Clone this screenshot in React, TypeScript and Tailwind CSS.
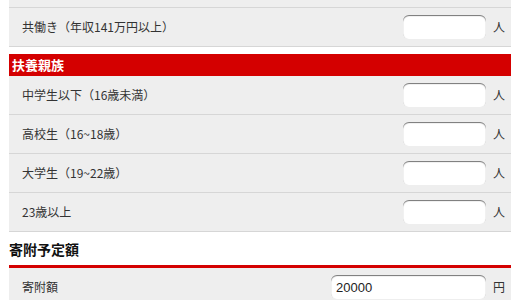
import React from 'react';

interface CountRowProps {
  label: string;
  unit: string;
  value?: string;
  wide?: boolean;
  className?: string;
}

const CountRow: React.FC<CountRowProps> = ({ label, unit, value = '', wide = false, className = '' }) => (
  <div className={`flex h-[39px] items-center justify-between border-b border-[#d6d6d6] bg-[#eeeeee] pl-[13px] pr-[6px] ${className}`}>
    <span className="text-[12px] text-[#333]">{label}</span>
    <div className="flex items-center">
      <input
        type="text"
        defaultValue={value}
        className={`h-[24px] rounded-[6px] bg-white px-[5px] text-[13px] text-[#222] shadow-[inset_0_1px_1px_rgba(0,0,0,0.55)] outline-none ${wide ? 'w-[155px]' : 'w-[83px]'}`}
        style={{ fontFamily: '"Liberation Sans", Arial, sans-serif' }}
      />
      <span className="ml-[7px] w-[12px] text-[12px] text-[#333]">{unit}</span>
    </div>
  </div>
);

const App: React.FC = () => {
  return (
    <div
      className="h-[300px] w-[520px] overflow-hidden bg-white pl-[9px] pr-[9px]"
      style={{ fontFamily: '"Noto Sans CJK JP", "Noto Sans", sans-serif' }}
    >
      {/* row above, scrolled mostly out of view */}
      <CountRow label="" unit="" className="-mt-[31px]" />
      <CountRow label="共働き（年収141万円以上）" unit="人" />

      <div className="mt-[7px] flex h-[22px] items-center bg-[#d40000] pl-[3px] text-[13px] font-bold text-white">
        扶養親族
      </div>
      <CountRow label="中学生以下（16歳未満）" unit="人" />
      <CountRow label="高校生（16~18歳）" unit="人" />
      <CountRow label="大学生（19~22歳）" unit="人" />
      <CountRow label="23歳以上" unit="人" />

      <div className="flex h-[36px] items-end border-b-[3px] border-[#d40000] pb-[8px]">
        <h2 className="text-[14px] font-bold leading-[16px] text-[#111]">寄附予定額</h2>
      </div>
      <CountRow label="寄附額" unit="円" value="20000" wide />
    </div>
  );
};

export default App;
